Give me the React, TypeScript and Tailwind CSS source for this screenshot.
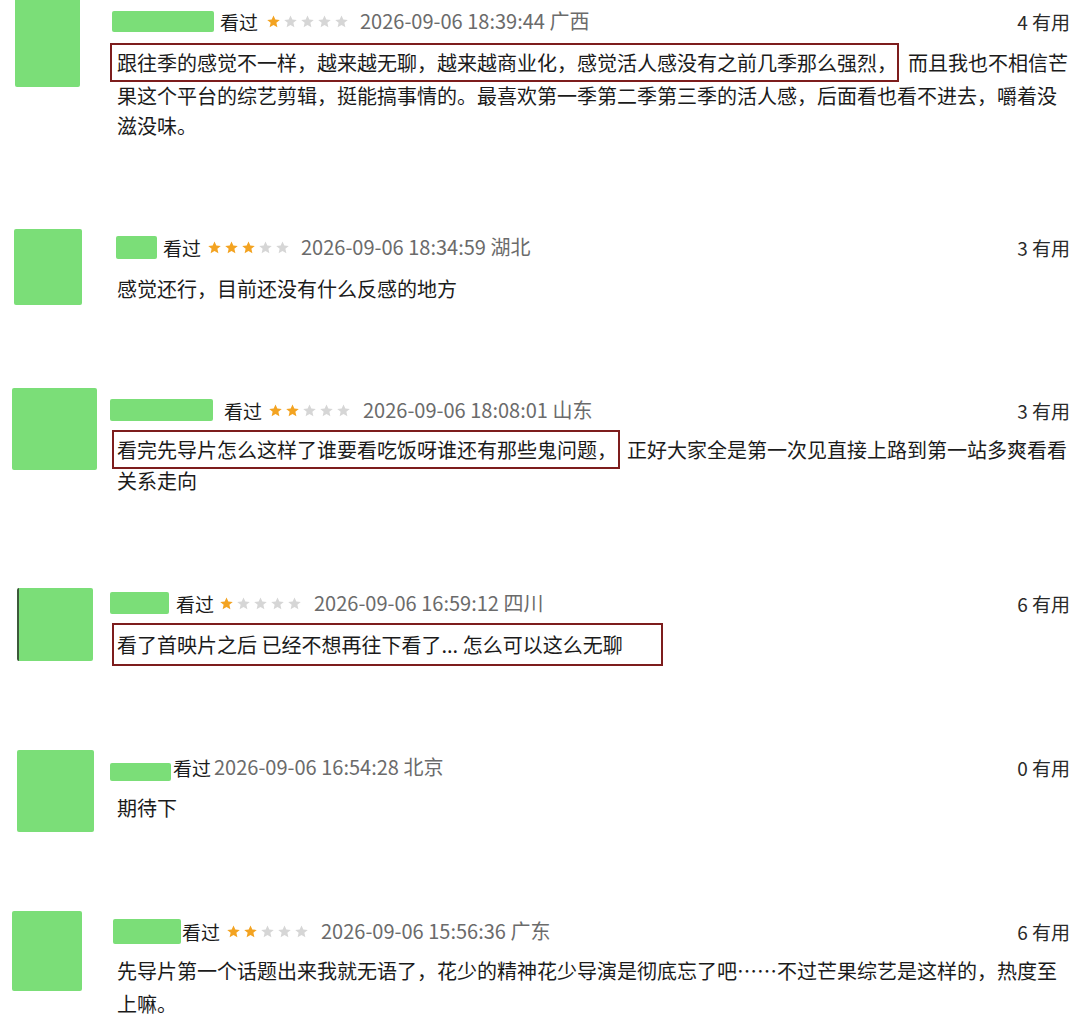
import React from 'react';

const font = { fontFamily: '"Noto Sans CJK SC", "Noto Sans", sans-serif' };

function Star({ on }: { on: boolean }) {
  return (
    <svg width="15" height="15" viewBox="0 0 24 24" className="shrink-0">
      <path
        d="M12 2.2l2.9 6.6 7.1.6-5.4 4.7 1.6 7-6.2-3.7-6.2 3.7 1.6-7L2 9.4l7.1-.6z"
        fill={on ? '#f3a321' : '#d6d6d6'}
      />
    </svg>
  );
}

function Stars({ n, className }: { n: number; className: string }) {
  return (
    <div className={'flex gap-[2px] ' + className}>
      {[0, 1, 2, 3, 4].map((i) => (
        <Star key={i} on={i < n} />
      ))}
    </div>
  );
}

function Avatar({ className }: { className: string }) {
  return <div className={'shrink-0 rounded-[2px] bg-[#7bde78] ' + className} />;
}

function Header({
  nameCls,
  seenCls,
  stars,
  starsCls,
  dateCls,
  date,
  useful,
}: {
  nameCls: string;
  seenCls: string;
  stars?: number;
  starsCls?: string;
  dateCls: string;
  date: string;
  useful: number;
}) {
  return (
    <div className="flex h-[28px] items-center">
      <div className={'shrink-0 rounded-[2px] bg-[#7bde78] ' + nameCls} />
      <span className={'text-[19px] leading-none text-[#1b1b1b] ' + seenCls}>看过</span>
      {stars !== undefined && <Stars n={stars} className={starsCls || ''} />}
      <span className={'text-[20px] leading-none text-[#6b6b6b] ' + dateCls}>{date}</span>
      <span className="ml-auto text-[19px] leading-none text-[#2a2a2a]">{useful} 有用</span>
    </div>
  );
}

export default function App() {
  return (
    <div className="h-[1022px] w-[1080px] overflow-hidden bg-white" style={font}>
      {/* 1 */}
      <div className="flex h-[229px] items-start">
        <Avatar className="ml-[15px] -mt-[4px] h-[91px] w-[65px]" />
        <div className="ml-[32px] mt-[7px] flex-1 pr-[10px]">
          <Header
            nameCls="h-[21px] w-[102px]"
            seenCls="ml-[6px]"
            stars={1}
            starsCls="ml-[8px]"
            dateCls="ml-[11px]"
            date="2026-09-06 18:39:44 广西"
            useful={4}
          />
          <div className="mt-[11px] pl-[5px] text-[20px] leading-[33px] whitespace-nowrap text-[#1b1b1b]">
            <div>
              <span className="-ml-[7px] mr-[9px] border-2 border-[#7d1d1d] py-[3px] pl-[5px]">
                跟往季的感觉不一样，越来越无聊，越来越商业化，感觉活人感没有之前几季那么强烈，
              </span>
              而且我也不相信芒
            </div>
            <div>果这个平台的综艺剪辑，挺能搞事情的。最喜欢第一季第二季第三季的活人感，后面看也看不进去，嚼着没</div>
            <div className="-mt-[3px]">滋没味。</div>
          </div>
        </div>
      </div>

      {/* 2 */}
      <div className="flex h-[159px] items-start">
        <Avatar className="ml-[14px] h-[76px] w-[68px]" />
        <div className="ml-[34px] mt-[4px] flex-1 pr-[10px]">
          <Header
            nameCls="h-[23px] w-[41px]"
            seenCls="ml-[6px]"
            stars={3}
            starsCls="ml-[6px]"
            dateCls="ml-[11px]"
            date="2026-09-06 18:34:59 湖北"
            useful={3}
          />
          <div className="mt-[12px] pl-[1px] text-[20px] leading-[32px] whitespace-nowrap text-[#1b1b1b]">
            <div>感觉还行，目前还没有什么反感的地方</div>
          </div>
        </div>
      </div>

      {/* 3 */}
      <div className="flex h-[200px] items-start">
        <Avatar className="ml-[12px] h-[82px] w-[85px]" />
        <div className="ml-[13px] mt-[8px] flex-1 pr-[10px]">
          <Header
            nameCls="h-[22px] w-[103px]"
            seenCls="ml-[11px]"
            stars={2}
            starsCls="ml-[6px]"
            dateCls="ml-[12px]"
            date="2026-09-06 18:08:01 山东"
            useful={3}
          />
          <div className="mt-[10px] pl-[7px] text-[20px] leading-[31px] whitespace-nowrap text-[#1b1b1b]">
            <div>
              <span className="-ml-[5px] mr-[7px] border-2 border-[#7d1d1d] py-[3px] pl-[3px] pr-[1px]">
                看完先导片怎么这样了谁要看吃饭呀谁还有那些鬼问题，
              </span>
              正好大家全是第一次见直接上路到第一站多爽看看
            </div>
            <div>关系走向</div>
          </div>
        </div>
      </div>

      {/* 4 */}
      <div className="flex h-[162px] items-start">
        <Avatar className="ml-[17px] h-[73px] w-[76px] border-l-2 border-l-[#3c5a3a]" />
        <div className="ml-[17px] mt-[1px] flex-1 pr-[10px]">
          <Header
            nameCls="h-[22px] w-[59px]"
            seenCls="ml-[7px]"
            stars={1}
            starsCls="ml-[5px]"
            dateCls="ml-[12px]"
            date="2026-09-06 16:59:12 四川"
            useful={6}
          />
          <div className="mt-[12px] pl-[7px] text-[20px] leading-[32px] whitespace-nowrap text-[#1b1b1b]">
            <div>
              <span className="-ml-[5px] border-2 border-[#7d1d1d] py-[5px] pl-[3px] pr-[38px]">
                看了首映片之后 已经不想再往下看了... 怎么可以这么无聊
              </span>
            </div>
          </div>
        </div>
      </div>

      {/* 5 */}
      <div className="flex h-[161px] items-start">
        <Avatar className="ml-[17px] h-[82px] w-[77px]" />
        <div className="ml-[16px] mt-[3px] flex-1 pr-[10px]">
          <Header
            nameCls="h-[18px] w-[61px] mt-[9px]"
            seenCls="ml-[2px]"
            dateCls="ml-[3px]"
            date="2026-09-06 16:54:28 北京"
            useful={0}
          />
          <div className="mt-[11px] pl-[7px] text-[20px] leading-[32px] whitespace-nowrap text-[#1b1b1b]">
            <div>期待下</div>
          </div>
        </div>
      </div>

      {/* 6 */}
      <div className="flex h-[111px] items-start">
        <Avatar className="ml-[12px] h-[80px] w-[70px]" />
        <div className="ml-[31px] mt-[6px] flex-1 pr-[10px]">
          <Header
            nameCls="h-[25px] w-[68px]"
            seenCls="ml-[1px]"
            stars={2}
            starsCls="ml-[6px]"
            dateCls="ml-[12px]"
            date="2026-09-06 15:56:36 广东"
            useful={6}
          />
          <div className="mt-[9px] pl-[4px] text-[20px] leading-[33px] whitespace-nowrap text-[#1b1b1b]">
            <div>先导片第一个话题出来我就无语了，花少的精神花少导演是彻底忘了吧……不过芒果综艺是这样的，热度至</div>
            <div>上嘛。</div>
          </div>
        </div>
      </div>
    </div>
  );
}
